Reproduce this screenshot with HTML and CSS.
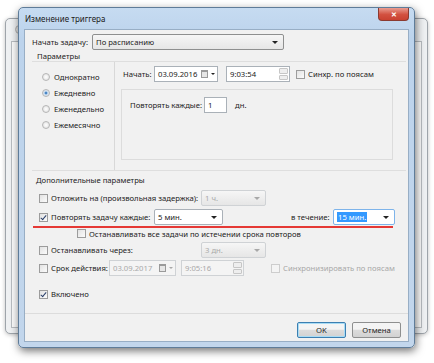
FILE: index.html
```html
<!DOCTYPE html>
<html lang="ru">
<head>
    <meta charset="UTF-8">
    <meta name="viewport" content="width=device-width, initial-scale=1.0">
    <title>Изменение триггера</title>
    <link rel="stylesheet" href="styles.css">
</head>
<body>
    <div class="desk">
        <div class="win back">
            <div class="back-title"><span class="back-icon"></span></div>
            <div class="back-client"></div>
        </div>

        <div class="win main">
            <div class="titlebar">
                <span class="title">Изменение триггера</span>
                <span class="close">✕</span>
            </div>
            <div class="client">
                <div class="row start-row">
                    <span class="lbl">Начать задачу:</span>
                    <div class="field select start-select">По расписанию<i class="arrow"></i></div>
                </div>
                <div class="caption">Параметры</div>

                <div class="params">
                    <div class="radios">
                        <div class="radio"><span class="dot"></span>Однократно</div>
                        <div class="radio"><span class="dot on"></span>Ежедневно</div>
                        <div class="radio"><span class="dot"></span>Еженедельно</div>
                        <div class="radio"><span class="dot"></span>Ежемесячно</div>
                    </div>
                    <div class="sched">
                        <div class="row begin-row">
                            <span class="lbl begin-lbl">Начать:</span>
                            <div class="field date">03.09.2016<span class="cal"></span><i class="arrow"></i></div>
                            <div class="field time">9:03:54<span class="spin"><b></b><b></b></span></div>
                            <span class="check"></span><span class="lbl">Синхр. по поясам</span>
                        </div>
                        <div class="repeat-box">
                            <div class="row">
                                <span class="lbl every-lbl">Повторять каждые:</span>
                                <div class="field days">1</div>
                                <span class="lbl">дн.</span>
                            </div>
                        </div>
                    </div>
                </div>

                <div class="caption extra-caption">Дополнительные параметры</div>

                <div class="row opt r1">
                    <span class="check"></span>
                    <span class="lbl opt-lbl">Отложить на (произвольная задержка):</span>
                    <div class="field select off short">1 ч.<i class="arrow"></i></div>
                </div>
                <div class="row opt r2">
                    <span class="check on"></span>
                    <span class="lbl rep-lbl">Повторять задачу каждые:</span>
                    <div class="field select every">5 мин.<i class="arrow"></i></div>
                    <span class="lbl during">в течение:</span>
                    <div class="field select during-sel"><span class="sel-text">15 мин.</span><i class="arrow"></i></div>
                </div>
                <div class="redline"></div>
                <div class="row opt r3">
                    <span class="check"></span>
                    <span class="lbl">Останавливать все задачи по истечении срока повторов</span>
                </div>
                <div class="row opt r4">
                    <span class="check"></span>
                    <span class="lbl opt-lbl">Останавливать через:</span>
                    <div class="field select off short">3 дн.<i class="arrow"></i></div>
                </div>
                <div class="row opt r5">
                    <span class="check"></span>
                    <span class="lbl exp-lbl">Срок действия:</span>
                    <div class="field date off exp-date">03.09.2017<span class="cal"></span><i class="arrow"></i></div>
                    <div class="field time off exp-time">9:05:16<span class="spin"><b></b><b></b></span></div>
                    <span class="check off"></span><span class="lbl dim">Синхронизировать по поясам</span>
                </div>
                <div class="row opt r6">
                    <span class="check on"></span>
                    <span class="lbl">Включено</span>
                </div>

                <div class="footer">
                    <span class="btn ok">OK</span>
                    <span class="btn">Отмена</span>
                </div>
            </div>
        </div>
    </div>
</body>
</html>
```

FILE: styles.css
```css
@charset "UTF-8";

* {
    margin: 0;
    padding: 0;
    box-sizing: border-box;
}

html {
    font-family: "Noto Sans", "Open Sans", sans-serif;
    font-size: 7.7px;
    color: #222;
}

body {
    background-color: white;
    width: 434px;
    height: 363px;
    overflow: hidden;
}

.desk {
    position: relative;
    width: 434px;
    height: 363px;
}

/* windows on the desktop */
.win {
    position: absolute;
    border-radius: 5px;
}

.back {
    left: 5px;
    top: 18px;
    width: 423px;
    height: 316px;
    border: 1px solid #9ea4aa;
    background-color: #eef0f2;
    padding: 0 5px 5px 5px;
    display: flex;
    flex-direction: column;
    box-shadow: 0 1px 4px rgba(0, 0, 0, 0.25);
}
.back-title {height: 22px; padding: 6px 4px;}
.back-icon {display: block; width: 9px; height: 9px; border-radius: 50%; border: 1px solid #b0b0b0; background: #e0e0e0;}
.back-client {flex: 1; border: 1px solid #b8bcc0; background-color: #fafafa;}

.main {
    left: 18px;
    top: 7px;
    width: 397px;
    height: 341px;
    border: 1px solid #5f7c99;
    background: linear-gradient(#c6dbf1, #bcd3ec 30px, #c2d6ec);
    padding: 0 5px 5px 5px;
    display: flex;
    flex-direction: column;
    box-shadow: 1px 3px 9px rgba(0, 0, 0, 0.55);
}

.titlebar {
    height: 21px;
    display: flex;
    align-items: flex-start;
    justify-content: space-between;
}
.title {font-size: 8px; padding: 5px 0 0 1px; color: #1a1a1a;}
.close {
    width: 31px;
    height: 13px;
    border: 1px solid #8b3a30;
    border-top: none;
    border-radius: 0 0 4px 4px;
    background: linear-gradient(#ea9c90, #d2503f 55%, #c94231);
    color: white;
    font-size: 7px;
    font-weight: bold;
    display: flex;
    align-items: center;
    justify-content: center;
}

.client {
    flex: 1;
    border: 1px solid #98aec5;
    background-color: #f1f1f1;
    position: relative;
}

.row {
    display: flex;
    align-items: center;
    white-space: nowrap;
}
.row > * {flex: none;}

.lbl {line-height: 10px;}
.dim {color: #a8a8a8;}

.field {
    position: relative;
    height: 16px;
    border: 1px solid #aab1b8;
    background-color: white;
    display: flex;
    align-items: center;
    padding-left: 3px;
    line-height: 10px;
}
.field.off {background-color: #f4f4f4; border-color: #cfd2d5; color: #a9a9a9;}

.select {
    background: linear-gradient(#f6f6f6, #e6e6e6);
    border-color: #8e8f8f;
    border-radius: 2px;
}
.arrow {
    position: absolute;
    right: 5px;
    top: 6px;
    width: 0;
    height: 0;
    border-left: 3px solid transparent;
    border-right: 3px solid transparent;
    border-top: 3px solid #222;
}
.off .arrow {border-top-color: #a8a8a8;}

.start-row {height: 16px; margin: 4px 0 0 7px;}
.start-row .lbl {width: 60px;}
.start-select {width: 192px;}

.caption {margin: 1px 0 0 12px; height: 10px; line-height: 10px;}

.params {
    display: flex;
    height: 110px;
    margin: 0 0 0 7px;
    width: 374px;
    border-top: 1px solid #dedede;
    border-bottom: 1px solid #dedede;
}

.radios {
    width: 83px;
    border-right: 1px solid #d8d8d8;
    padding: 10px 0 0 10px;
    display: flex;
    flex-direction: column;
    gap: 6px;
}
.radio {display: flex; align-items: center; height: 10px;}
.dot {
    width: 8px;
    height: 8px;
    border-radius: 50%;
    border: 1px solid #b6b6b6;
    background: radial-gradient(#ffffff, #dcdcdc);
    margin-right: 4px;
}
.dot.on {background: radial-gradient(#4a86c4 30%, #cfe1f3 40%, #e8e8e8);}

.sched {flex: 1; padding: 4px 0 0 8px;}
.begin-row {height: 16px;}
.begin-lbl {width: 31px;}
.date {width: 64px; margin-right: 8px;}
.cal {
    position: absolute;
    right: 9px;
    top: 3px;
    width: 7px;
    height: 8px;
    border: 1px solid #9a9a9a;
    border-top-width: 2px;
    background-color: #e6e6e6;
}
.date .arrow {right: 2px; border-left-width: 2px; border-right-width: 2px; border-top-width: 2px;}
.time {width: 64px; margin-right: 6px;}
.spin {
    position: absolute;
    right: 1px;
    top: 1px;
    bottom: 1px;
    width: 9px;
    display: flex;
    flex-direction: column;
    gap: 1px;
}
.spin b {flex: 1; border: 1px solid #c6c6c6; background-color: #eeeeee; border-radius: 1px;}

.check {
    width: 9px;
    height: 9px;
    border: 1px solid #9c9c9c;
    background: linear-gradient(135deg, #e2e2e2, #fbfbfb);
    margin-right: 3px;
    position: relative;
}
.check.on::after {
    content: "";
    position: absolute;
    left: 2px;
    top: 0;
    width: 2px;
    height: 5px;
    border-right: 1px solid #2a3f6a;
    border-bottom: 1px solid #2a3f6a;
    transform: rotate(40deg);
}
.check.off {border-color: #cdcdcd; background: #f4f4f4;}

.repeat-box {
    margin: 7px 0 0 -2px;
    width: 272px;
    height: 71px;
    border: 1px solid #dcdcdc;
    padding: 7px 0 0 8px;
}
.repeat-box .row {height: 16px;}
.every-lbl {width: 74px;}
.days {width: 23px; margin-right: 8px;}

.extra-caption {margin: 4px 0 0 11px;}

.opt {margin-left: 14px;}
.r1 {height: 16px; margin-top: 5px;}
.r2 {height: 16px; margin-top: 3px;}
.r3 {height: 11px; margin: 0 0 0 52px;}
.r4 {height: 16px; margin-top: 3px;}
.r5 {height: 16px; margin-top: 2px;}
.r6 {height: 12px; margin-top: 12px;}

.opt-lbl {width: 150px;}
.short {width: 65px;}
.rep-lbl {width: 103px;}
.every {width: 69px; border-color: #aab1b8; background: white;}
.during {margin-left: 68px; width: 42px;}
.during-sel {width: 62px; border-color: #7eb4ea; background: white;}
.sel-text {background-color: #3399ff; color: white; padding: 0 1px;}

.redline {
    height: 2px;
    margin: 1px 0 0 8px;
    width: 360px;
    background-color: #e53935;
}

.exp-lbl {width: 58px;}
.exp-date {width: 67px; margin-right: 5px;}
.exp-time {width: 63px; margin-right: 27px;}

.footer {
    position: absolute;
    left: 0;
    right: 0;
    bottom: 0;
    height: 28px;
    border-top: 1px solid #dcdcdc;
    display: flex;
    justify-content: flex-end;
    align-items: flex-start;
    gap: 6px;
    padding: 8px 7px 0 0;
}
.btn {
    width: 49px;
    height: 16px;
    border: 1px solid #8e8f8f;
    border-radius: 2px;
    background: linear-gradient(#f4f4f4 45%, #dcdcdc 50%, #d2d2d2);
    display: flex;
    align-items: center;
    justify-content: center;
}
.btn.ok {border-color: #3c7fb1; box-shadow: inset 0 0 0 1px #a8dcf5;}
```
